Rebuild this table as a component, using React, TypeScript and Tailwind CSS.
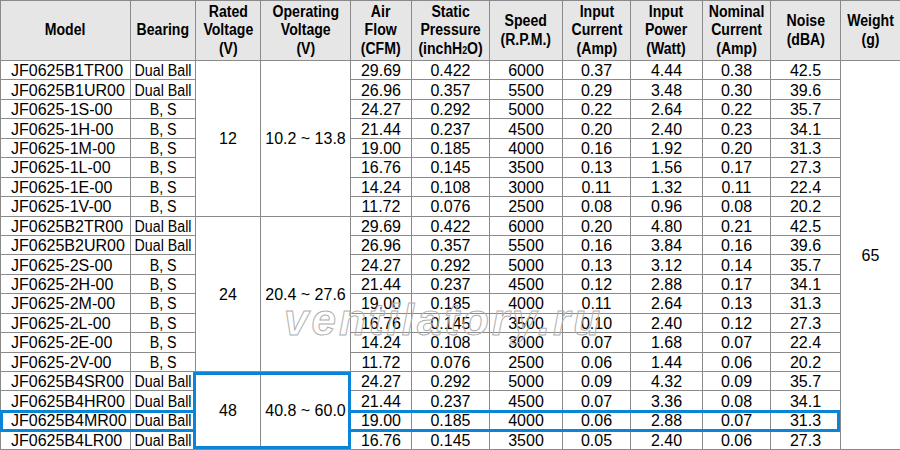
import React from "react";

type Row = [string, string, string, string, string, string, string, string, string];

const g1: Row[] = [
  ["JF0625B1TR00", "Dual Ball", "29.69", "0.422", "6000", "0.37", "4.44", "0.38", "42.5"],
  ["JF0625B1UR00", "Dual Ball", "26.96", "0.357", "5500", "0.29", "3.48", "0.30", "39.6"],
  ["JF0625-1S-00", "B, S", "24.27", "0.292", "5000", "0.22", "2.64", "0.22", "35.7"],
  ["JF0625-1H-00", "B, S", "21.44", "0.237", "4500", "0.20", "2.40", "0.23", "34.1"],
  ["JF0625-1M-00", "B, S", "19.00", "0.185", "4000", "0.16", "1.92", "0.20", "31.3"],
  ["JF0625-1L-00", "B, S", "16.76", "0.145", "3500", "0.13", "1.56", "0.17", "27.3"],
  ["JF0625-1E-00", "B, S", "14.24", "0.108", "3000", "0.11", "1.32", "0.11", "22.4"],
  ["JF0625-1V-00", "B, S", "11.72", "0.076", "2500", "0.08", "0.96", "0.08", "20.2"],
];
const g2: Row[] = [
  ["JF0625B2TR00", "Dual Ball", "29.69", "0.422", "6000", "0.20", "4.80", "0.21", "42.5"],
  ["JF0625B2UR00", "Dual Ball", "26.96", "0.357", "5500", "0.16", "3.84", "0.16", "39.6"],
  ["JF0625-2S-00", "B, S", "24.27", "0.292", "5000", "0.13", "3.12", "0.14", "35.7"],
  ["JF0625-2H-00", "B, S", "21.44", "0.237", "4500", "0.12", "2.88", "0.17", "34.1"],
  ["JF0625-2M-00", "B, S", "19.00", "0.185", "4000", "0.11", "2.64", "0.13", "31.3"],
  ["JF0625-2L-00", "B, S", "16.76", "0.145", "3500", "0.10", "2.40", "0.12", "27.3"],
  ["JF0625-2E-00", "B, S", "14.24", "0.108", "3000", "0.07", "1.68", "0.07", "22.4"],
  ["JF0625-2V-00", "B, S", "11.72", "0.076", "2500", "0.06", "1.44", "0.06", "20.2"],
];
const g3: Row[] = [
  ["JF0625B4SR00", "Dual Ball", "24.27", "0.292", "5000", "0.09", "4.32", "0.09", "35.7"],
  ["JF0625B4HR00", "Dual Ball", "21.44", "0.237", "4500", "0.07", "3.36", "0.08", "34.1"],
  ["JF0625B4MR00", "Dual Ball", "19.00", "0.185", "4000", "0.06", "2.88", "0.07", "31.3"],
  ["JF0625B4LR00", "Dual Ball", "16.76", "0.145", "3500", "0.05", "2.40", "0.06", "27.3"],
];

const groups: { rows: Row[]; rated: string; op: string }[] = [
  { rows: g1, rated: "12", op: "10.2 ~ 13.8" },
  { rows: g2, rated: "24", op: "20.4 ~ 27.6" },
  { rows: g3, rated: "48", op: "40.8 ~ 60.0" },
];

const widths = [130, 65, 65, 90, 61, 78, 73, 68, 72, 68, 70, 60];

const th = "border border-[#8a8a8a] bg-[#e6e6e6] p-0 align-middle text-center font-bold text-[16px] leading-[18.5px]";
const td = "border border-[#8a8a8a] p-0 pt-[2px] text-[16px] leading-[16px] text-center align-middle whitespace-nowrap";

function H({ lines }: { lines: React.ReactNode[] }) {
  return (
    <span className="inline-block scale-x-[0.88] whitespace-nowrap">
      {lines.map((l, i) => (
        <span key={i} className="block">
          {l}
        </span>
      ))}
    </span>
  );
}

export default function App() {
  let first = true;
  return (
    <div className="relative w-[900px] h-[450px] overflow-hidden bg-white text-black font-['Liberation_Sans',Arial,sans-serif]">
      <table className="border-collapse table-fixed w-[900px]">
        <colgroup>
          {widths.map((w, i) => (
            <col key={i} style={{ width: w }} />
          ))}
        </colgroup>
        <thead>
          <tr className="h-[60px]">
            <th className={th}><H lines={["Model"]} /></th>
            <th className={th}><H lines={["Bearing"]} /></th>
            <th className={th}><H lines={["Rated", "Voltage", "(V)"]} /></th>
            <th className={th}><H lines={["Operating", "Voltage", "(V)"]} /></th>
            <th className={th}><H lines={["Air", "Flow", "(CFM)"]} /></th>
            <th className={th}>
              <H
                lines={[
                  "Static",
                  "Pressure",
                  <span key="p">
                    (inchH<span className="text-[10px] leading-none">2</span>O)
                  </span>,
                ]}
              />
            </th>
            <th className={th}><H lines={["Speed", "(R.P.M.)"]} /></th>
            <th className={th}><H lines={["Input", "Current", "(Amp)"]} /></th>
            <th className={th}><H lines={["Input", "Power", "(Watt)"]} /></th>
            <th className={th}><H lines={["Nominal", "Current", "(Amp)"]} /></th>
            <th className={th}><H lines={["Noise", "(dBA)"]} /></th>
            <th className={th}><H lines={["Weight", "(g)"]} /></th>
          </tr>
        </thead>
        <tbody>
          {groups.map((g, gi) =>
            g.rows.map((r, ri) => {
              const showWeight = first;
              first = false;
              return (
                <tr key={`${gi}-${ri}`} className="h-[19.45px]">
                  <td className={`${td} text-left pl-[10px]`}>{r[0]}</td>
                  <td className={td}>
                    <span className="inline-block scale-x-[0.89]">{r[1]}</span>
                  </td>
                  {ri === 0 && (
                    <>
                      <td className={td} rowSpan={g.rows.length}>{g.rated}</td>
                      <td className={td} rowSpan={g.rows.length}>{g.op}</td>
                    </>
                  )}
                  {r.slice(2).map((c, ci) => (
                    <td key={ci} className={td}>{c}</td>
                  ))}
                  {showWeight && (
                    <td className={td} rowSpan={20}>65</td>
                  )}
                </tr>
              );
            })
          )}
        </tbody>
      </table>

      {/* highlight overlays */}
      <div className="absolute left-0 top-[410px] w-[195px] h-[22px] border-[3px] border-r-0 border-[#0a84d6]" />
      <div className="absolute left-[349px] top-[410px] w-[491px] h-[22px] border-[3px] border-l-0 border-[#0a84d6]" />
      <div className="absolute left-[193px] top-[372px] w-[158px] h-[77px] border-[3px] border-[#0a84d6]" />

      {/* watermark */}
      <div className="pointer-events-none absolute left-[284px] top-[294px] text-[44px] leading-[52px] italic font-bold tracking-[3px] text-transparent [-webkit-text-stroke:1px_#b0b0b0]">
        ventilatory.ru
      </div>
    </div>
  );
}
